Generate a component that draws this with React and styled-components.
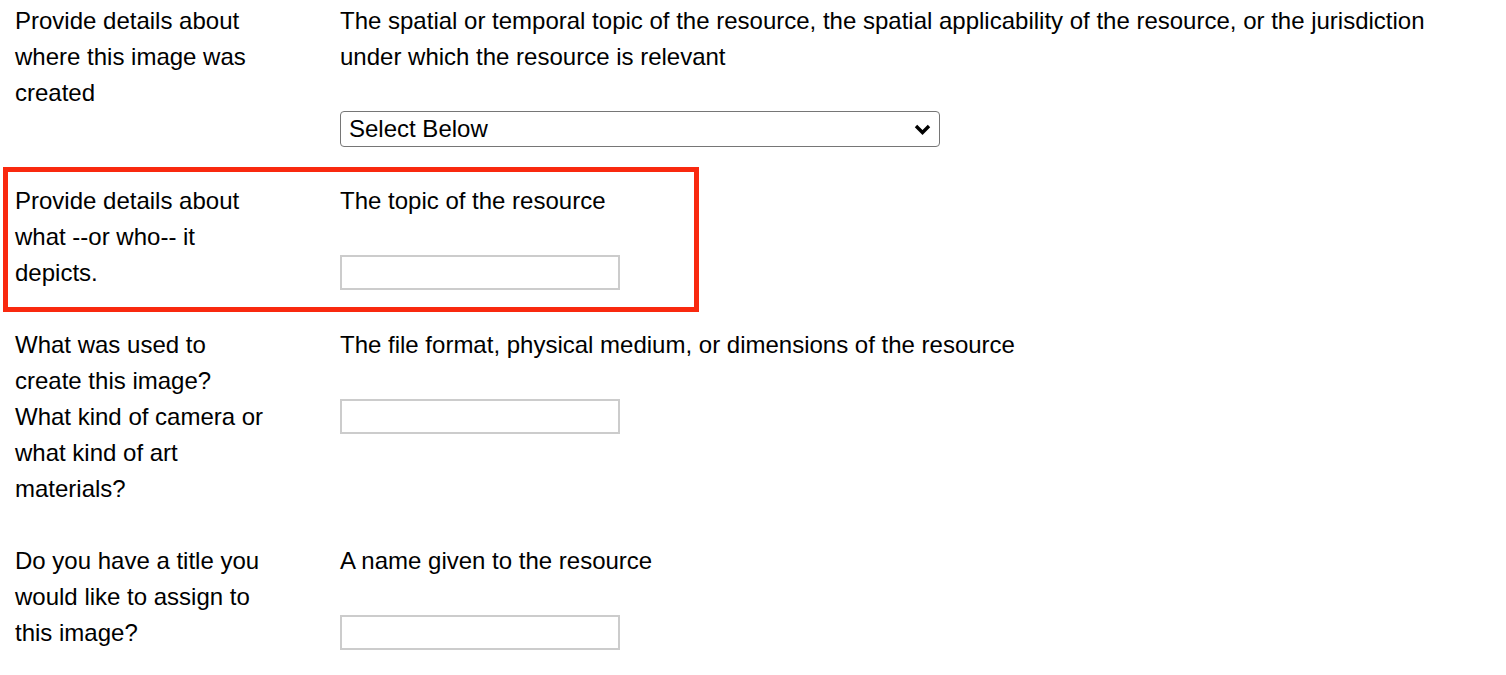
import React from 'react'
import styled, { createGlobalStyle } from 'styled-components'

const GlobalStyle = createGlobalStyle`
  html, body {
    margin: 0;
    background: #fff;
  }
  body {
    font-family: 'Liberation Sans', Arial, Helvetica, sans-serif;
    font-size: 24px;
    line-height: 36px;
    color: #000;
  }
`

const rows = [
  {
    label: 'Provide details about where this image was created',
    desc: 'The spatial or temporal topic of the resource, the spatial applicability of the resource, or the jurisdiction under which the resource is relevant',
    control: 'select',
  },
  {
    label: 'Provide details about what --or who-- it depicts.',
    desc: 'The topic of the resource',
    control: 'input',
    highlight: true,
  },
  {
    label: 'What was used to create this image? What kind of camera or what kind of art materials?',
    desc: 'The file format, physical medium, or dimensions of the resource',
    control: 'input',
  },
  {
    label: 'Do you have a title you would like to assign to this image?',
    desc: 'A name given to the resource',
    control: 'input',
  },
]

const Chevron = () => (
  <ChevronIcon viewBox='0 0 17 11' width='17' height='11'>
    <path d='M2 2 L8.5 8.5 L15 2' fill='none' stroke='#000' strokeWidth='3.4' />
  </ChevronIcon>
)

const App = () => {
  return (
    <>
      <GlobalStyle />
      <Form>
        {rows.map((row, i) => (
          <Row key={i} $highlight={row.highlight}>
            <Label>{row.label}</Label>
            <Field>
              <Desc>{row.desc}</Desc>
              {row.control === 'select' ? (
                <SelectWrap>
                  <Select defaultValue=''>
                    <option value=''>Select Below</option>
                  </Select>
                  <Chevron />
                </SelectWrap>
              ) : (
                <TextInput type='text' />
              )}
            </Field>
          </Row>
        ))}
      </Form>
    </>
  )
}

const Form = styled.form`
  display: flex;
  flex-direction: column;
  gap: 36px;
  padding: 3px 30px 0 15px;
`

const Row = styled.div`
  display: grid;
  grid-template-columns: 257px 1fr;
  column-gap: 68px;
  align-items: start;
  ${({ $highlight }) =>
    $highlight &&
    `
    box-sizing: border-box;
    width: 696px;
    border: 5px solid #f9290f;
    padding: 11px 0 16px 7px;
    margin: -16px 0 -21px -12px;
  `}
`

const Label = styled.div`
  width: 257px;
`

const Field = styled.div`
  display: flex;
  flex-direction: column;
  align-items: flex-start;
`

const Desc = styled.p`
  margin: 0 0 36px;
`

const SelectWrap = styled.div`
  position: relative;
  width: 600px;
`

const Select = styled.select`
  appearance: none;
  -webkit-appearance: none;
  box-sizing: border-box;
  width: 100%;
  height: 36px;
  margin: 0;
  padding: 0 8px;
  font: inherit;
  line-height: 34px;
  color: #000;
  background: #fff;
  border: 1px solid #767676;
  border-radius: 4px;
  outline: none;
`

const ChevronIcon = styled.svg`
  position: absolute;
  right: 9px;
  top: 13px;
  pointer-events: none;
`

const TextInput = styled.input`
  box-sizing: border-box;
  width: 280px;
  height: 35px;
  margin: 0;
  padding: 0 6px;
  font: inherit;
  border: 2px solid #cccccc;
  border-radius: 0;
  background: #fff;
  outline: none;
`

export default App
